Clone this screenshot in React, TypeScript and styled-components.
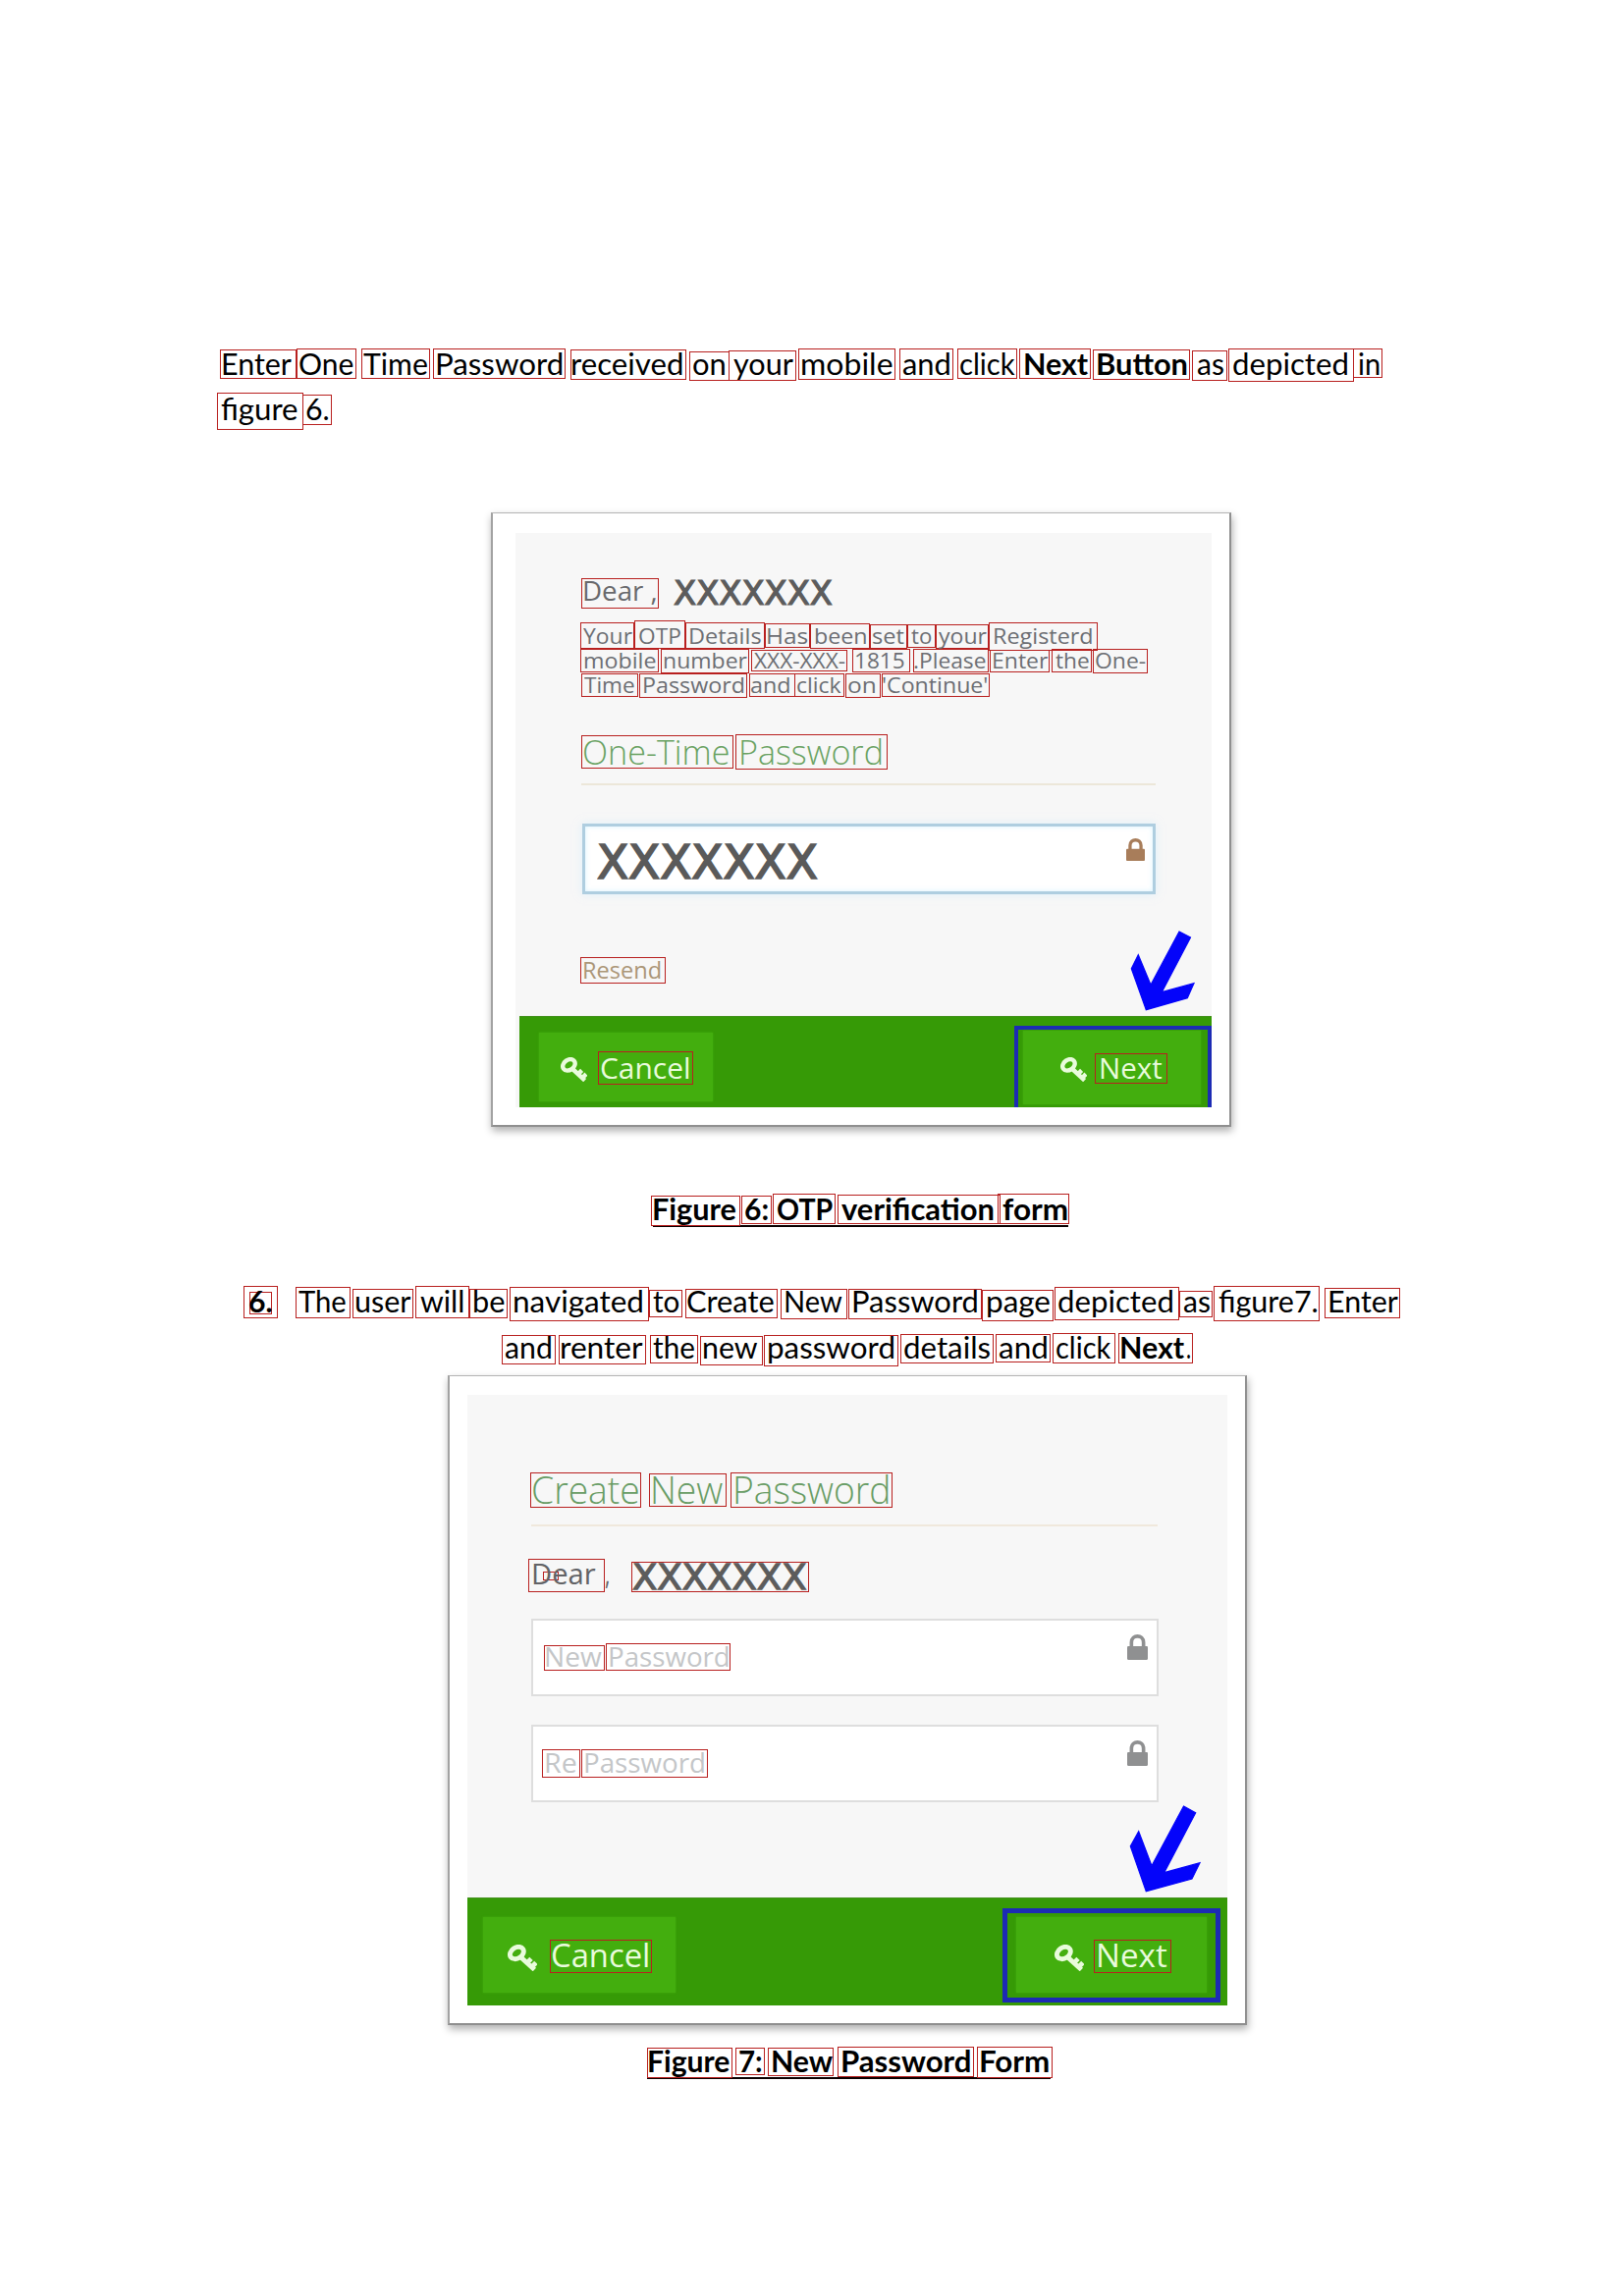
import React from 'react';
import styled, { createGlobalStyle, css } from 'styled-components';

const GlobalStyle = createGlobalStyle`
  body { margin: 0; background: #fff; }
  *, *::before, *::after { box-sizing: border-box; }
`;

const BODY = 'Lato, "Liberation Sans", sans-serif';
const FORM = '"Open Sans", "Noto Sans", sans-serif';
const MASK = '"DejaVu Sans", "Open Sans", sans-serif';

type Kind = {
  family: string;
  size: number;
  weight: number;
  color: string;
};

const kinds = {
  body: { family: BODY, size: 30, weight: 400, color: '#000' },
  strong: { family: BODY, size: 30, weight: 700, color: '#000' },
  dear: { family: FORM, size: 27, weight: 400, color: '#68696c' },
  dearLarge: { family: FORM, size: 29.5, weight: 400, color: '#626366' },
  note: { family: FORM, size: 22, weight: 400, color: '#6c6e73' },
  title: { family: FORM, size: 35.5, weight: 300, color: '#69a262' },
  titleLarge: { family: FORM, size: 39, weight: 300, color: '#689c64' },
  link: { family: FORM, size: 23, weight: 400, color: '#ab9678' },
  hint: { family: FORM, size: 28, weight: 400, color: '#c4c6c8' },
  action: { family: FORM, size: 30, weight: 400, color: '#e9fbdc' },
  actionLarge: { family: FORM, size: 33, weight: 400, color: '#e9fbdc' },
  mask: { family: MASK, size: 33, weight: 400, color: '#5c5c5c' },
  maskMedium: { family: MASK, size: 36, weight: 400, color: '#5c5c5c' },
  maskLarge: { family: MASK, size: 48, weight: 400, color: '#5a5a5a' },
} satisfies Record<string, Kind>;

type KindName = keyof typeof kinds;

/* text, box left/right, box top/bottom, glyph left/right, optional kind, optional unboxed flag */
type WordSpec = [
  string, number, number, number, number, number, number, KindName?, boolean?
];

const Row = styled.div<{ $h: number; $gap?: number; $rule?: boolean }>`
  display: flex;
  align-items: flex-start;
  flex: none;
  height: ${p => p.$h}px;
  margin-top: ${p => p.$gap ?? 0}px;
  ${p => p.$rule && css`border-bottom: 2px solid #0a0000;`}
`;

const Tag = styled.span<{ $boxed: boolean }>`
  display: block;
  flex: none;
  border: 1px solid ${p => (p.$boxed ? '#b8201f' : 'transparent')};
`;

const Glyphs = styled.span<{ $kind: Kind }>`
  display: block;
  width: max-content;
  white-space: pre;
  transform-origin: 0 0;
  font-family: ${p => p.$kind.family};
  font-size: ${p => p.$kind.size}px;
  font-weight: ${p => p.$kind.weight};
  color: ${p => p.$kind.color};
  ${p => p.$kind.family === MASK && css`-webkit-text-stroke: ${p.$kind.size / 28}px ${p.$kind.color};`}
`;

const ctx = document.createElement('canvas').getContext('2d')!;

function fit(text: string, kind: Kind, width: number) {
  ctx.font = `${kind.weight} ${kind.size}px ${kind.family}`;
  const m = ctx.measureText(text);
  const scale = width / (m.actualBoundingBoxLeft + m.actualBoundingBoxRight);
  const trim = Math.round(kind.size * 0.14);
  const ascent = Math.round(m.fontBoundingBoxAscent);
  const descent = Math.round(m.fontBoundingBoxDescent);
  return {
    scale,
    inset: m.actualBoundingBoxLeft * scale,
    rise: ascent - trim,
    leading: ascent + descent - trim * 2,
  };
}

type LineProps = {
  from: number;
  top: number;
  base: number;
  h: number;
  gap?: number;
  kind: KindName;
  rule?: boolean;
  words: WordSpec[];
};

function Line({ from, top, base, h, gap, kind, rule, words }: LineProps) {
  let edge = from;
  return (
    <Row $h={h} $gap={gap} $rule={rule}>
      {words.map(([text, l, r, t, b, inkL, inkR, own, bare], i) => {
        const k = kinds[own ?? kind];
        const shift = l - edge;
        edge = r;
        const f = text ? fit(text, k, inkR - inkL) : null;
        return (
          <Tag
            key={i}
            $boxed={!bare}
            style={{ marginLeft: shift, marginTop: t - top, width: r - l, height: b - t }}
          >
            {f && (
              <Glyphs
                $kind={k}
                style={{
                  lineHeight: `${f.leading}px`,
                  marginLeft: inkL - l - 1 + f.inset,
                  marginTop: base - t - 1 - f.rise,
                  transform: `scaleX(${f.scale})`,
                }}
              >
                {text}
              </Glyphs>
            )}
          </Tag>
        );
      })}
    </Row>
  );
}

const Page = styled.main`
  display: flex;
  flex-direction: column;
  width: 1654px;
  height: 2339px;
  padding-top: 355px;
  overflow: hidden;
  background: #fff;
`;

const Caption = styled.div<{ $left: number; $width: number; $gap: number }>`
  flex: none;
  width: ${p => p.$width}px;
  margin: ${p => p.$gap}px 0 0 ${p => p.$left}px;
`;

const Frame = styled.section<{ $left: number; $gap: number; $w: number; $h: number; $pad: string }>`
  flex: none;
  width: ${p => p.$w}px;
  height: ${p => p.$h}px;
  margin: ${p => p.$gap}px 0 0 ${p => p.$left}px;
  padding: ${p => p.$pad};
  background: #fff;
  border: 2px solid #8f8f8f;
  border-top: 1px solid #b4b4b4;
  border-left-color: #a2a2a2;
  box-shadow: 1px 4px 8px rgba(0, 0, 0, 0.32);
`;

const Panel = styled.div<{ $w: number; $h: number }>`
  position: relative;
  display: flex;
  flex-direction: column;
  width: ${p => p.$w}px;
  height: ${p => p.$h}px;
  background: #f7f7f7;
`;

const Divider = styled.hr<{ $left: number; $w: number; $gap: number; $color: string }>`
  flex: none;
  width: ${p => p.$w}px;
  height: 2px;
  margin: ${p => p.$gap}px 0 0 ${p => p.$left}px;
  border: 0;
  background: ${p => p.$color};
`;

const Field = styled.div<{ $left: number; $w: number; $h: number; $gap: number; $active?: boolean }>`
  display: flex;
  flex: none;
  justify-content: space-between;
  align-items: flex-start;
  width: ${p => p.$w}px;
  height: ${p => p.$h}px;
  margin: ${p => p.$gap}px 0 0 ${p => p.$left}px;
  background: #fff;
  border: 2px solid #dedede;
  ${p => p.$active && css`
    border: 3px solid #afcee0;
    box-shadow: 0 0 8px rgba(200, 236, 255, 0.5), inset 0 0 5px rgba(200, 238, 255, 0.7);
  `}
`;

const LockSvg = styled.svg<{ $w: number; $h: number; $top: number; $right: number }>`
  flex: none;
  width: ${p => p.$w}px;
  height: ${p => p.$h}px;
  margin: ${p => p.$top}px ${p => p.$right}px 0 0;
`;

function Lock(p: { w: number; h: number; top: number; right: number; color: string }) {
  return (
    <LockSvg viewBox="0 0 58 69" preserveAspectRatio="none" $w={p.w} $h={p.h} $top={p.top} $right={p.right}>
      <path d="M12 36V22C12 -0.5 46 -0.5 46 22V36" fill="none" stroke={p.color} strokeWidth="10" />
      <rect x="0" y="32" width="58" height="37" rx="3" fill={p.color} />
    </LockSvg>
  );
}

const Bar = styled.footer<{ $left?: number; $h: number; $gap: number }>`
  display: flex;
  flex: none;
  justify-content: space-between;
  align-items: flex-start;
  height: ${p => p.$h}px;
  margin: ${p => p.$gap}px 0 0 ${p => p.$left ?? 0}px;
  background: #369a06;
  border-top: 1px solid #43901c;
`;

const Action = styled.div<{ $w: number; $h: number; $m?: string }>`
  display: flex;
  align-items: flex-start;
  width: ${p => p.$w}px;
  height: ${p => p.$h}px;
  margin: ${p => p.$m ?? 0};
  background: #43ae0e;
  box-shadow: 0 0 2px #43ae0e;
`;

const Highlight = styled.div<{ $w: number; $h: number; $m: string; $pad: string; $border: number; $open?: boolean }>`
  width: ${p => p.$w}px;
  height: ${p => p.$h}px;
  margin: ${p => p.$m};
  padding: ${p => p.$pad};
  border: ${p => p.$border}px solid #1c2bb4;
  ${p => p.$open && css`border-bottom: 0;`}
`;

const KeySvg = styled.svg<{ $w: number; $h: number; $left: number; $top: number }>`
  flex: none;
  width: ${p => p.$w}px;
  height: ${p => p.$h}px;
  margin: ${p => p.$top}px 0 0 ${p => p.$left}px;
`;

function Key(p: { w: number; h: number; left: number; top: number }) {
  return (
    <KeySvg viewBox="0 0 80 73" preserveAspectRatio="none" $w={p.w} $h={p.h} $left={p.left} $top={p.top}>
      <g fill="none" stroke="#e9fbdc" strokeWidth="13">
        <ellipse cx="25" cy="23" rx="20" ry="15" transform="rotate(-35 25 23)" />
        <path d="M36 35L73 69M52 51L64 39M65 62L77 50" />
      </g>
    </KeySvg>
  );
}

const ArrowSvg = styled.svg<{ $left: number; $top: number }>`
  position: absolute;
  left: ${p => p.$left}px;
  top: ${p => p.$top}px;
  overflow: visible;
`;

export default function App() {
  return (
    <>
      <GlobalStyle />
      <Page>
        <Line from={0} top={355} base={381.5} h={45} kind="body" words={[
          ['Enter', 224, 302, 356, 386, 227, 297],
          ['One', 302, 363, 355, 386, 305.5, 360],
          ['Time', 368, 438, 355, 386, 370, 435],
          ['Password', 441, 576, 355, 386, 445, 572.3],
          ['received', 581, 699, 356, 387, 583.5, 695],
          ['on', 702, 743, 358, 388, 706, 738],
          ['your', 742, 811, 357, 388, 747, 808],
          ['mobile', 813, 912, 355, 387, 817.5, 909],
          ['and', 916, 971, 355, 387, 919, 967],
          ['click', 975, 1036, 355, 386, 977.6, 1034],
          ['Next', 1038, 1111, 355, 386, 1044, 1108, 'strong'],
          ['Button', 1113, 1212, 356, 387, 1118, 1209, 'strong'],
          ['as', 1214, 1250, 357, 388, 1219, 1246],
          ['depicted', 1251, 1379, 355, 389, 1256, 1372],
          ['in', 1378, 1408, 355, 385, 1383.5, 1404],
        ]} />
        <Line from={0} top={400} base={427.5} h={38} kind="body" words={[
          ['figure', 221, 309, 400, 438, 224.8, 302.5],
          ['6.', 308, 338, 402, 433, 312.4, 335],
        ]} />

        <Frame $left={500} $gap={84} $w={754} $h={626} $pad="20px 0 0 23px">
          <Panel $w={709} $h={585}>
            <Line from={525} top={589} base={612} h={31} gap={46} kind="dear" words={[
              ['Dear ,', 592, 671, 589, 620, 595, 667.7],
            ]} />
            <Line from={525} top={589} base={616} h={31} gap={-31} kind="mask" words={[
              ['XXXXXXX', 685, 848, 589, 620, 685.7, 847, 'mask', true],
            ]} />
            <Line from={525} top={632} base={655.5} h={29} gap={12} kind="note" words={[
              ['Your', 591, 646, 634, 661, 594, 644],
              ['OTP', 646, 698, 632, 661, 651.5, 694],
              ['Details', 698, 779, 634, 661, 703, 775],
              ['Has', 779, 825, 635, 660, 782.5, 823],
              ['been', 825, 886, 635, 661, 830, 882],
              ['set', 886, 924, 636, 661, 889, 921],
              ['to', 924, 953, 636, 660, 928, 949],
              ['your', 953, 1007, 636, 661, 956, 1005],
              ['Registerd', 1007, 1118, 634, 663, 1013, 1112],
            ]} />
            <Line from={525} top={661} base={680.5} h={25} kind="note" words={[
              ['mobile', 591, 671, 661, 685, 595, 668],
              ['number', 673, 763, 661, 686, 676, 761],
              ['XXX-XXX-', 765, 863, 662, 684, 768, 861],
              ['1815', 868, 927, 661, 685, 871, 921],
              ['.Please', 930, 1007, 661, 685, 931, 1004],
              ['Enter', 1008, 1069, 662, 685, 1011.7, 1067],
              ['the', 1071, 1112, 661, 685, 1074.7, 1109],
              ['One-', 1113, 1169, 661, 686, 1116, 1167],
            ]} />
            <Line from={525} top={686} base={705.5} h={25} kind="note" words={[
              ['Time', 592, 650, 686, 710, 594.7, 646],
              ['Password', 651, 761, 686, 711, 655.7, 757],
              ['and', 763, 810, 686, 710, 765, 804],
              ['click', 809, 860, 686, 710, 812, 857],
              ['on', 861, 897, 686, 711, 864, 891],
              ["'Continue'", 898, 1008, 686, 710, 899.5, 1006],
            ]} />
            <Line from={525} top={748} base={779} h={36} gap={37} kind="title" words={[
              ['One-Time', 592, 747, 749, 783, 595, 742],
              ['Password', 749, 904, 748, 784, 755, 898],
            ]} />
            <Divider $left={67} $w={585} $gap={14} $color="#ece7d9" />
            <Field $left={68} $w={584} $h={72} $gap={39} $active>
              <Line from={596} top={842} base={895} h={66} kind="maskLarge" words={[
                ['XXXXXXX', 608, 833, 850, 900, 609, 832, undefined, true],
              ]} />
              <Lock w={19} h={23} top={12} right={8} color="#a87d5a" />
            </Field>
            <Line from={525} top={975} base={997} h={27} gap={64} kind="link" words={[
              ['Resend', 591, 678, 975, 1002, 595, 673],
            ]} />
            <Bar $left={4} $h={93} $gap={33}>
              <Action $w={177} $h={70} $m="16px 0 0 20px">
                <Key w={27} h={25} left={22} top={25} />
                <Line from={598} top={1071} base={1099} h={34} gap={19} kind="action" words={[
                  ['Cancel', 609, 706, 1071, 1105, 612, 702],
                ]} />
              </Action>
              <Highlight $w={201} $h={83} $m="9px 0 0" $pad="1px 0 0 5px" $border={4} $open>
                <Action $w={181} $h={75}>
                  <Key w={27} h={25} left={38} top={27} />
                  <Line from={1107} top={1073} base={1099} h={31} gap={23} kind="action" words={[
                    ['Next', 1115, 1189, 1073, 1104, 1121, 1183],
                  ]} />
                </Action>
              </Highlight>
            </Bar>
            <ArrowSvg $left={627} $top={406} width="64" height="80" viewBox="1152 949 64 80">
              <path fill="#0404fa" stroke="#0404fa" strokeWidth="1.2" d="M1201 949L1212.5 955L1183.3 1010.7L1216 1001.7L1209.3 1016.7L1167.3 1028.7L1152.3 986.7L1159.3 972.7L1172 1003.3Z" />
            </ArrowSvg>
          </Panel>
        </Frame>

        <Caption $left={665} $width={423} $gap={68}>
          <Line from={665} top={1216} base={1243} h={34} kind="strong" rule words={[
            ['Figure', 663, 754, 1218, 1249, 665.7, 749.6],
            ['6:', 755, 786, 1218, 1247, 759, 782.4],
            ['OTP', 787, 851, 1216, 1247, 792.3, 848],
            ['verification', 853, 1019, 1217, 1247, 856.6, 1011.6],
            ['form', 1016, 1089, 1216, 1247, 1021, 1087],
          ]} />
        </Caption>

        <Line from={0} top={1310} base={1337} h={48} gap={60} kind="body" words={[
          ['6.', 248, 283, 1310, 1343, 254.5, 277, 'strong'],
          ['', 254, 277, 1316, 1339, 0, 0],
          ['The', 301, 357, 1311, 1343, 304, 352],
          ['user', 359, 421, 1313, 1343, 362.5, 419],
          ['will', 423, 478, 1310, 1343, 427.7, 471],
          ['be', 478, 517, 1313, 1343, 483.5, 514],
          ['navigated', 519, 661, 1311, 1346, 524, 654],
          ['to', 661, 695, 1314, 1342, 664.6, 691],
          ['Create', 698, 792, 1313, 1343, 700.5, 788.3],
          ['New', 795, 863, 1313, 1344, 799.8, 858],
          ['Password', 864, 1000, 1313, 1344, 869, 995],
          ['page', 1000, 1073, 1314, 1346, 1006, 1069],
          ['depicted', 1074, 1201, 1311, 1345, 1078, 1194],
          ['as', 1201, 1235, 1315, 1342, 1204.6, 1231.5],
          ['figure7.', 1236, 1344, 1310, 1346, 1241.3, 1342],
          ['Enter', 1349, 1426, 1312, 1343, 1354, 1424],
        ]} />
        <Line from={0} top={1358} base={1384} h={43} kind="body" words={[
          ['and', 511, 566, 1360, 1390, 514, 561],
          ['renter', 569, 658, 1360, 1390, 572.4, 655],
          ['the', 662, 711, 1360, 1389, 665, 707],
          ['new', 713, 777, 1361, 1391, 717.5, 772.5],
          ['password', 778, 915, 1360, 1392, 783, 910],
          ['details', 917, 1012, 1359, 1389, 920.7, 1007.7],
          ['and', 1014, 1070, 1359, 1388, 1017, 1066],
          ['click', 1072, 1136, 1358, 1389, 1076, 1132],
          ['Next', 1139, 1215, 1358, 1389, 1142.5, 1206.5, 'strong'],
          ['.', 1208, 1214, 1358, 1389, 1208.7, 1212.3, 'body', true],
        ]} />

        <Frame $left={456} $gap={0} $w={814} $h={662} $pad="19px 0 0 18px">
          <Panel $w={774} $h={622}>
            <Line from={476} top={1500} base={1532} h={36} gap={79} kind="titleLarge" words={[
              ['Create', 540, 653, 1500, 1536, 542.5, 650],
              ['New', 661, 740, 1501, 1535, 664.5, 735.7],
              ['Password', 744, 909, 1500, 1536, 748.5, 904],
            ]} />
            <Divider $left={65} $w={638} $gap={17} $color="#f0e8dc" />
            <Line from={476} top={1588} base={1613.5} h={34} gap={33} kind="dearLarge" words={[
              ['Dear', 538, 616, 1588, 1622, 543, 606.7],
              ['', 553, 569, 1601, 1610, 0, 0],
              [',', 616, 622, 1588, 1622, 617, 620.5, undefined, true],
            ]} />
            <Line from={476} top={1588} base={1619} h={34} gap={-34} kind="maskMedium" words={[
              ['XXXXXXX', 643, 824, 1591, 1622, 644.7, 820.5],
            ]} />
            <Field $left={65} $w={639} $h={79} $gap={27}>
              <Line from={543} top={1651} base={1698} h={75} kind="hint" words={[
                ['New', 554, 616, 1676, 1702, 556, 613],
                ['Password', 617, 744, 1674, 1702, 621, 741.7],
              ]} />
              <Lock w={21} h={26} top={14} right={9} color="#8f9091" />
            </Field>
            <Field $left={65} $w={639} $h={79} $gap={29}>
              <Line from={543} top={1759} base={1806} h={75} kind="hint" words={[
                ['Re', 552, 591, 1782, 1811, 556, 587],
                ['Password', 592, 721, 1782, 1811, 596, 717],
              ]} />
              <Lock w={21} h={26} top={14} right={9} color="#8f9091" />
            </Field>
            <Bar $h={110} $gap={97}>
              <Action $w={196} $h={77} $m="19px 0 0 16px">
                <Key w={30} h={27} left={25} top={28} />
                <Line from={547} top={1976} base={2004} h={34} gap={23} kind="actionLarge" words={[
                  ['Cancel', 560, 664, 1976, 2010, 563, 660],
                ]} />
              </Action>
              <Highlight $w={222} $h={96} $m="10px 7px 0 0" $pad="4px 0 0 9px" $border={5}>
                <Action $w={194} $h={77}>
                  <Key w={30} h={27} left={39} top={28} />
                  <Line from={1104} top={1976} base={2004} h={34} gap={23} kind="actionLarge" words={[
                    ['Next', 1114, 1193, 1976, 2010, 1119, 1188],
                  ]} />
                </Action>
              </Highlight>
            </Bar>
            <ArrowSvg $left={675} $top={419} width="71" height="87" viewBox="1151 1840 71 87">
              <path fill="#0404fa" stroke="#0404fa" strokeWidth="1.2" d="M1205.5 1840L1217.7 1846.7L1185.7 1907.7L1222 1897.7L1214 1914L1167.3 1926.7L1151.3 1880.7L1159.7 1865.7L1173 1900.7Z" />
            </ArrowSvg>
          </Panel>
        </Frame>

        <Caption $left={659} $width={411} $gap={22}>
          <Line from={659} top={2085} base={2111} h={33} kind="strong" rule words={[
            ['Figure', 659, 746, 2086, 2117, 660.7, 743],
            ['7:', 749, 779, 2086, 2114, 753, 776],
            ['New', 782, 849, 2086, 2115, 787, 848],
            ['Password', 853, 992, 2085, 2116, 857.7, 988],
            ['Form', 995, 1072, 2085, 2117, 999, 1068],
          ]} />
        </Caption>
      </Page>
    </>
  );
}
